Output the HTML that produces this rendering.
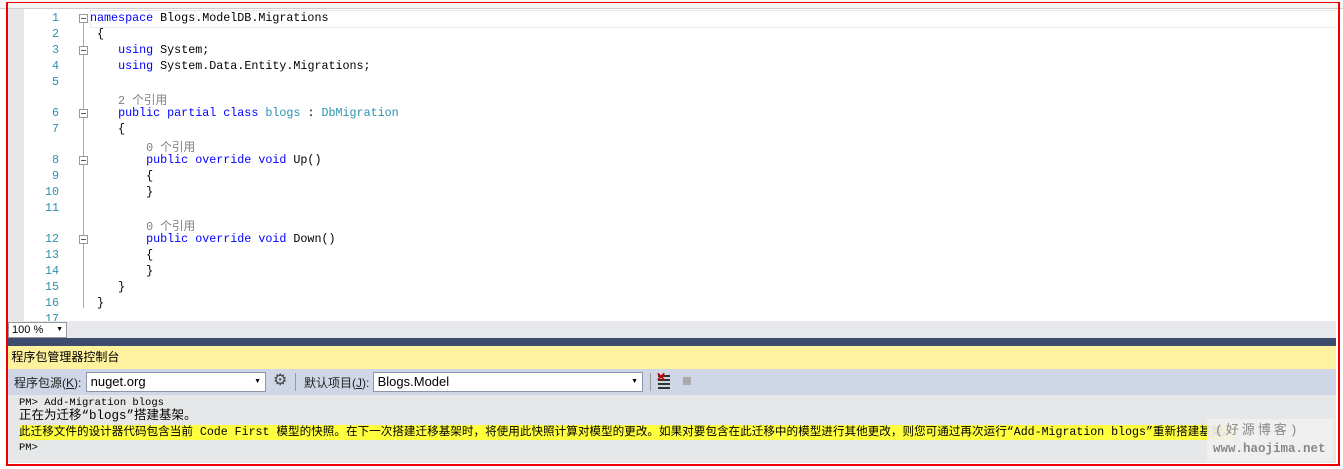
<!DOCTYPE html>
<html><head><meta charset="utf-8"><style>
body{margin:0;width:1343px;height:469px;background:#fff;position:relative;overflow:hidden;font-family:"Liberation Sans","Noto Sans CJK SC",sans-serif}
.abs{position:absolute}
.code{font-family:"Liberation Mono","Noto Sans CJK SC",monospace;font-size:11.7px;white-space:pre}
.ln{position:absolute;left:24px;width:35px;text-align:right;color:#2b91af}
.row{position:absolute;left:90px}
.k{color:#0000ff}.t{color:#2b91af}.g{color:#808080}
.fold{position:absolute;left:79px;width:7px;height:7px;border:1px solid #999;background:#fff}
.fold:after{content:"";position:absolute;left:1px;top:3px;width:5px;height:1px;background:#555}
.vl{position:absolute;left:83px;width:1px;background:#aaa}
.cz{font-family:"Liberation Mono","Noto Sans CJK SC",monospace;font-size:11.5px;white-space:pre;position:absolute;left:19px}
</style></head><body>
<div class="abs" style="left:0;top:0;width:1343px;height:8px;background:#f5f5f5;border-bottom:1px solid #ccc"></div>
<div class="abs" style="left:6px;top:2px;width:1330px;height:461px;border:2px solid #e00;border-top:1px solid #e00"></div>
<div class="abs" style="left:8px;top:9px;width:16px;height:312px;background:#e6e7e8"></div>
<div class="abs" style="left:90px;top:10px;width:1246px;height:16px;border:1px solid #e8e8e8;border-right:none"></div>
<div class="code">
<div class="ln" style="top:11px">1</div><div class="ln" style="top:27px">2</div><div class="ln" style="top:43px">3</div><div class="ln" style="top:59px">4</div><div class="ln" style="top:75px">5</div><div class="ln" style="top:106px">6</div><div class="ln" style="top:122px">7</div><div class="ln" style="top:153px">8</div><div class="ln" style="top:169px">9</div><div class="ln" style="top:185px">10</div><div class="ln" style="top:201px">11</div><div class="ln" style="top:232px">12</div><div class="ln" style="top:248px">13</div><div class="ln" style="top:264px">14</div><div class="ln" style="top:280px">15</div><div class="ln" style="top:296px">16</div><div class="ln" style="top:312px">17</div>
<div class="row" style="top:11px"><span class="k">namespace</span> Blogs.ModelDB.Migrations</div>
<div class="row" style="top:27px"> {</div>
<div class="row" style="top:43px">    <span class="k">using</span> System;</div>
<div class="row" style="top:59px">    <span class="k">using</span> System.Data.Entity.Migrations;</div>
<div class="row g" style="top:91px">    2 个引用</div>
<div class="row" style="top:106px">    <span class="k">public partial class</span> <span class="t">blogs</span> : <span class="t">DbMigration</span></div>
<div class="row" style="top:122px">    {</div>
<div class="row g" style="top:138px">        0 个引用</div>
<div class="row" style="top:153px">        <span class="k">public override void</span> Up()</div>
<div class="row" style="top:169px">        {</div>
<div class="row" style="top:185px">        }</div>
<div class="row g" style="top:217px">        0 个引用</div>
<div class="row" style="top:232px">        <span class="k">public override void</span> Down()</div>
<div class="row" style="top:248px">        {</div>
<div class="row" style="top:264px">        }</div>
<div class="row" style="top:280px">    }</div>
<div class="row" style="top:296px"> }</div>
</div>
<div class="fold" style="top:14px"></div><div class="vl" style="top:23px;height:285px"></div>
<div class="fold" style="top:46px"></div><div class="fold" style="top:109px"></div><div class="fold" style="top:156px"></div><div class="fold" style="top:235px"></div>
<div class="abs" style="left:8px;top:321px;width:1328px;height:17px;background:#e7e8ec"></div>
<div class="abs" style="left:8px;top:322px;width:57px;height:14px;background:#fff;border:1px solid #999;font-size:11px;line-height:14px">&nbsp;100 %<span style="position:absolute;right:3px;font-size:7px">▼</span></div>
<div class="abs" style="left:8px;top:338px;width:1328px;height:8px;background:#3d4b6c"></div>
<div class="abs" style="left:8px;top:346px;width:1328px;height:23px;background:#fff29e;font-size:12px;line-height:23px">&nbsp;程序包管理器控制台</div>
<div class="abs" style="left:8px;top:369px;width:1328px;height:26px;background:#cfd6e5;font-size:12px"></div>
<div class="abs" style="left:14px;top:374px;font-size:12px;color:#222">程序包源(<u>K</u>):</div>
<div class="abs" style="left:86px;top:372px;width:178px;height:18px;background:#fff;border:1px solid #8d97ab;font-size:13px;line-height:18px">&nbsp;nuget.org<span style="position:absolute;right:4px;font-size:7px">▼</span></div>
<div class="abs" style="left:273px;top:373px;font-size:16px;color:#444;line-height:16px">⚙</div>
<div class="abs" style="left:295px;top:373px;width:1px;height:18px;background:#999"></div>
<div class="abs" style="left:304px;top:374px;font-size:12px;color:#222">默认项目(<u>J</u>):</div>
<div class="abs" style="left:373px;top:372px;width:268px;height:18px;background:#fff;border:1px solid #8d97ab;font-size:13px;line-height:18px">&nbsp;Blogs.Model<span style="position:absolute;right:4px;font-size:7px">▼</span></div>
<div class="abs" style="left:650px;top:373px;width:1px;height:18px;background:#999"></div>
<div class="abs" style="left:658px;top:375px;width:12px;height:2px;background:#333;box-shadow:0 4px #333,0 8px #333,0 12px #333"></div>
<div class="abs" style="left:656px;top:370px;color:#c00;font-size:12px;font-weight:bold">✕</div>
<div class="abs" style="left:683px;top:377px;width:8px;height:8px;background:#aaa"></div>
<div class="abs" style="left:8px;top:395px;width:1328px;height:68px;background:#e6e7e8"></div>
<div class="cz" style="top:396px;font-size:10.5px;line-height:14px">PM&gt; Add-Migration blogs</div>
<div class="cz" style="top:409px;font-size:12.5px;line-height:15px">正在为迁移“blogs”搭建基架。</div>
<div class="cz" style="top:425px;font-size:11.6px;line-height:15px;background:#ffff40">此迁移文件的设计器代码包含当前 Code First 模型的快照。在下一次搭建迁移基架时，将使用此快照计算对模型的更改。如果对要包含在此迁移中的模型进行其他更改，则您可通过再次运行“Add-Migration blogs”重新搭建基架。</div>
<div class="cz" style="top:441px;font-size:10.5px;line-height:14px">PM&gt;</div>
<div class="abs" style="left:1207px;top:419px;width:126px;height:42px;background:rgba(240,240,240,.9);color:#888;font-family:'Liberation Mono',monospace">
<div style="font-size:13px;padding-left:8px;letter-spacing:3px">(好源博客)</div>
<div style="font-size:12.5px;font-weight:bold;padding-left:6px;margin-top:4px">www.haojima.net</div></div>
</body></html>
